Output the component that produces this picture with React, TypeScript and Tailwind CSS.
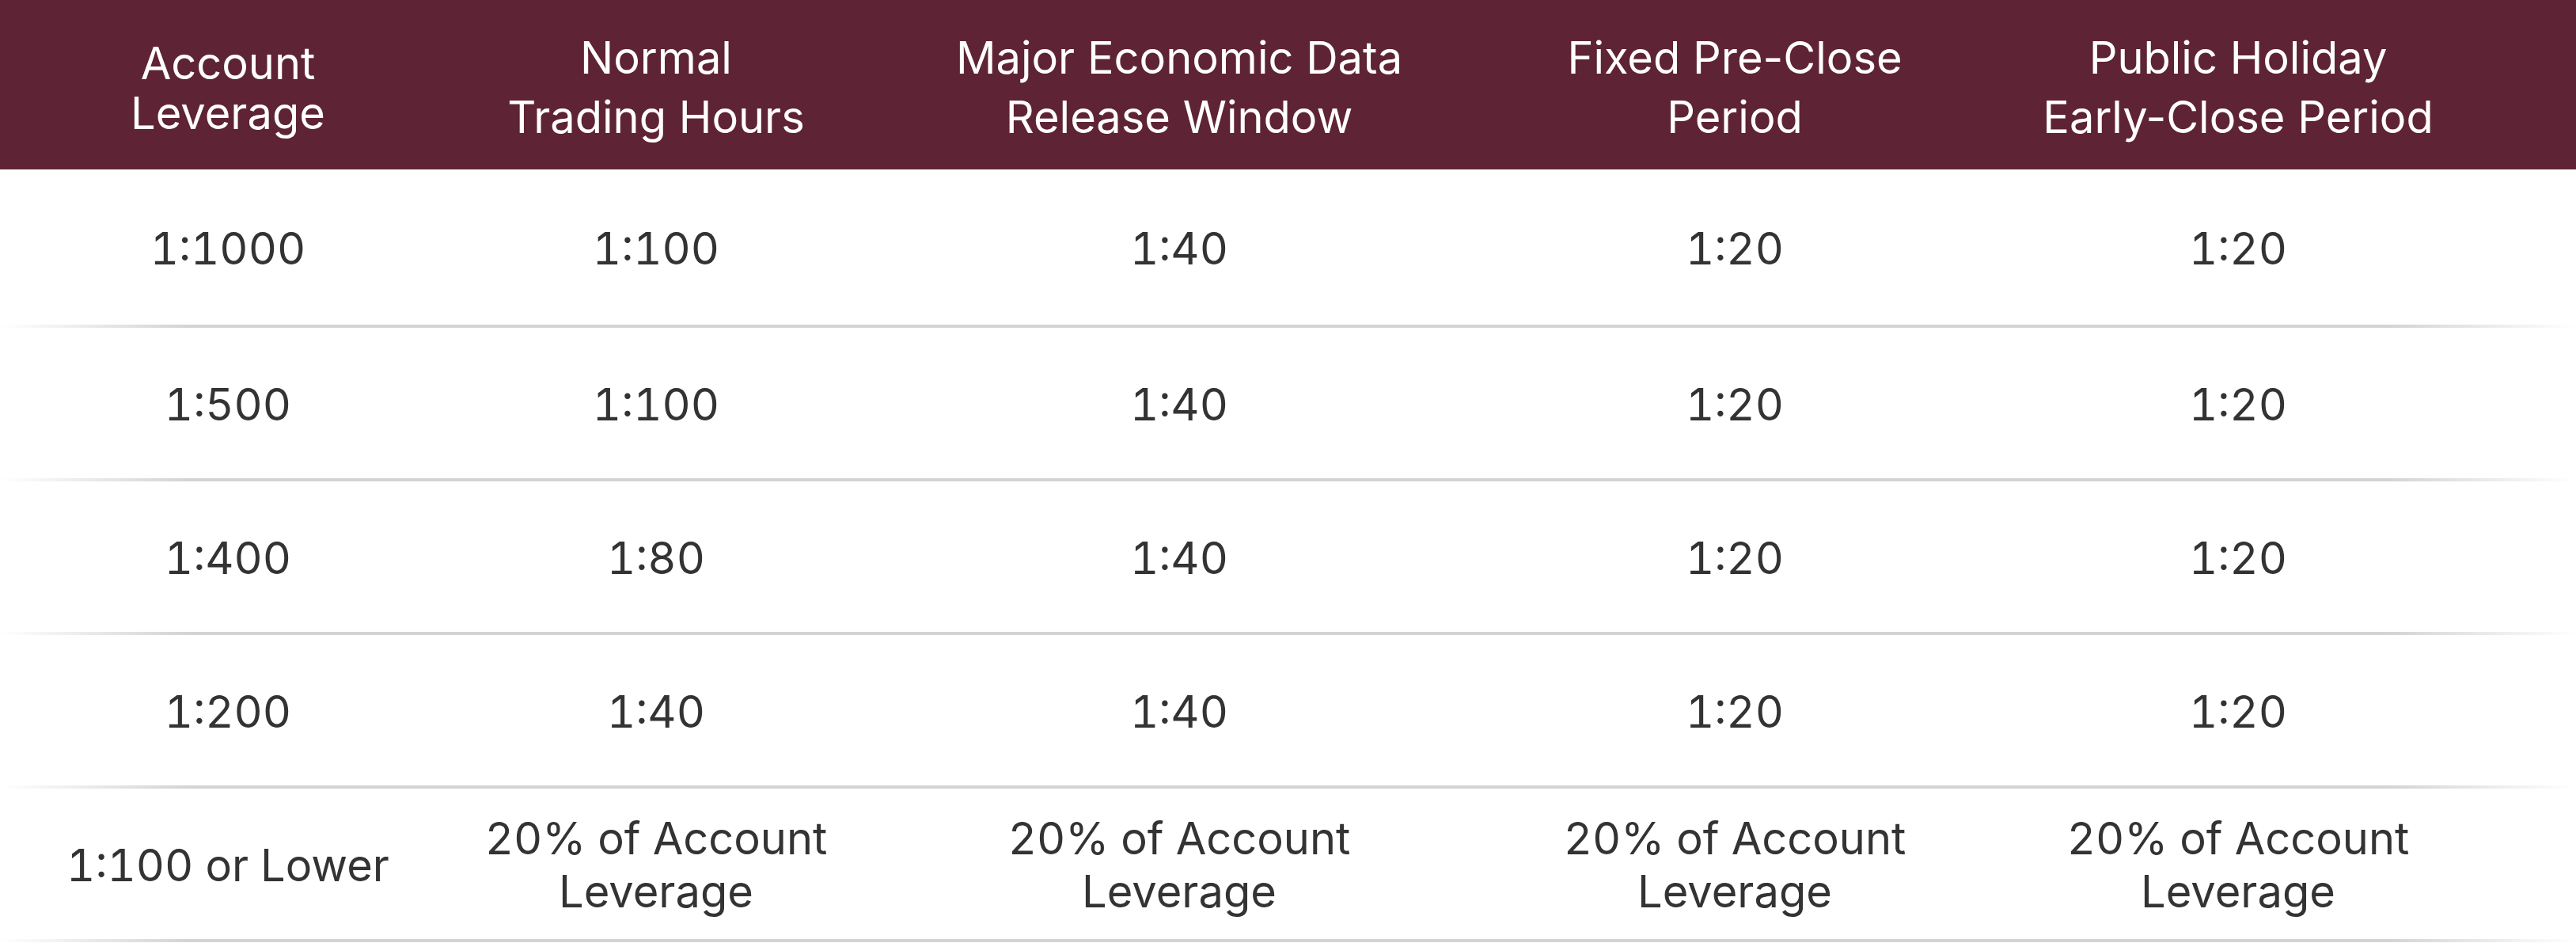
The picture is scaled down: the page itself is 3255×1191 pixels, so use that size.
const HEADERS: { lines: string[]; tight?: boolean }[] = [
  { lines: ["Account", "Leverage"], tight: true },
  { lines: ["Normal", "Trading Hours"] },
  { lines: ["Major Economic Data", "Release Window"] },
  { lines: ["Fixed Pre-Close", "Period"] },
  { lines: ["Public Holiday", "Early-Close Period"] },
];

const ROWS: string[][][] = [
  [["1:1000"], ["1:100"], ["1:40"], ["1:20"], ["1:20"]],
  [["1:500"], ["1:100"], ["1:40"], ["1:20"], ["1:20"]],
  [["1:400"], ["1:80"], ["1:40"], ["1:20"], ["1:20"]],
  [["1:200"], ["1:40"], ["1:40"], ["1:20"], ["1:20"]],
  [
    ["1:100 or Lower"],
    ["20% of Account", "Leverage"],
    ["20% of Account", "Leverage"],
    ["20% of Account", "Leverage"],
    ["20% of Account", "Leverage"],
  ],
];

const GRID = "grid grid-cols-[576px_506px_816px_588px_684px] pr-[85px]";

// fading divider under every row
function Divider() {
  return (
    <div className="flex h-[4px]">
      <div className="w-[240px] bg-linear-to-r from-white to-[#d2d3d5]" />
      <div className="flex-1 bg-[#d2d3d5]" />
      <div className="w-[240px] bg-linear-to-r from-[#d2d3d5] to-white" />
    </div>
  );
}

export default function App() {
  return (
    <div className="w-[3255px] min-h-[1191px] bg-white font-['Inter',sans-serif]">
      {/* ── Header ── */}
      <div className={`${GRID} h-[214px] bg-[#5e2334] text-white text-[56px]`}>
        {HEADERS.map((h, i) => (
          <div
            key={i}
            className={`flex flex-col items-center justify-center text-center ${h.tight ? "leading-[63px] pt-[9px]" : "leading-[75px] pt-[7px]"}`}
          >
            {h.lines.map((l) => (
              <span key={l}>{l}</span>
            ))}
          </div>
        ))}
      </div>

      {/* ── Body ── */}
      {ROWS.map((row, r) => (
        <div key={r}>
          <div
            className={`${GRID} ${r === 0 ? "h-[196px]" : "h-[190px]"} text-[#333333] text-[56px] leading-[67px] tabular-nums pt-[4px]`}
          >
            {row.map((cell, c) => (
              <div
                key={c}
                className="flex flex-col items-center justify-center text-center"
              >
                {cell.map((l) => (
                  <span key={l}>{l}</span>
                ))}
              </div>
            ))}
          </div>
          <Divider />
        </div>
      ))}
    </div>
  );
}
